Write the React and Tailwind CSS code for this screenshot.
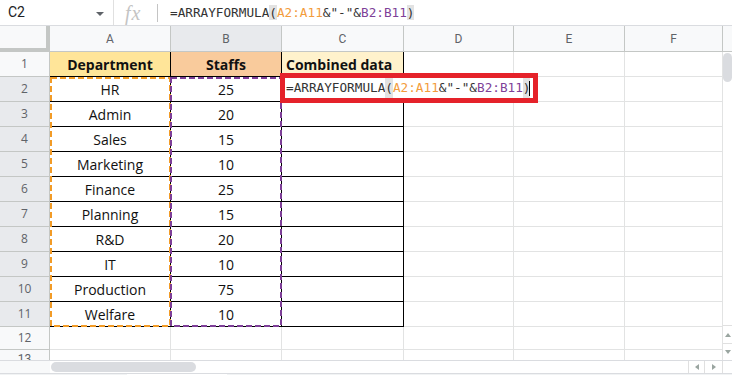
import React from "react";

const DATA = [
  ["HR", "25"],
  ["Admin", "20"],
  ["Sales", "15"],
  ["Marketing", "10"],
  ["Finance", "25"],
  ["Planning", "15"],
  ["R&D", "20"],
  ["IT", "10"],
  ["Production", "75"],
  ["Welfare", "10"],
];

const HEADERS = [
  { label: "A", w: "w-[121px]", bg: "bg-[#f8f9fa]" },
  { label: "B", w: "w-[111px]", bg: "bg-[#e8eaed]" },
  { label: "C", w: "w-[122px]", bg: "bg-[#f8f9fa]" },
  { label: "D", w: "w-[110px]", bg: "bg-[#f8f9fa]" },
  { label: "E", w: "w-[111px]", bg: "bg-[#f8f9fa]" },
  { label: "F", w: "w-[98px]", bg: "bg-[#f8f9fa]" },
];

const EMPTY = ["w-[110px]", "w-[111px]", "w-[98px]"];

const Formula = () => (
  <>
    <span>=ARRAYFORMULA</span>
    <span className="bg-[#e2e2e2]">(</span>
    <span className="text-[#f39c3c]">A2:A11</span>
    <span>{'&"-"&'}</span>
    <span className="text-[#7e3f98]">B2:B11</span>
    <span className="bg-[#e2e2e2]">)</span>
  </>
);

const RowNum = ({ n, active }) => (
  <div
    className={`flex w-[50px] items-center justify-center border-r border-b border-[#c4c7c5] text-[12px] text-[#5f6368] ${
      active ? "bg-[#e8eaed]" : "bg-[#f8f9fa]"
    }`}
  >
    {n}
  </div>
);

const EmptyCells = () =>
  EMPTY.map((w, i) => (
    <div key={i} className={`${w} border-r border-b border-[#e2e3e3]`} />
  ));

const Dashed = ({ w, h, color }) => (
  <svg width={w} height={h}>
    <rect
      x="1"
      y="1"
      width={w - 2}
      height={h - 2}
      fill="none"
      stroke={color}
      strokeWidth="2"
      strokeDasharray="6 3"
    />
  </svg>
);

const Tri = ({ dir }) => {
  const d = {
    up: "M0 4 L3 0 L6 4Z",
    down: "M0 0 L6 0 L3 4Z",
    left: "M4 0 L4 6 L0 3Z",
    right: "M0 0 L4 3 L0 6Z",
  }[dir];
  const vert = dir === "up" || dir === "down";
  return (
    <svg width={vert ? 6 : 4} height={vert ? 4 : 6}>
      <path d={d} fill="#9aa5a0" />
    </svg>
  );
};

export default function App() {
  return (
    <div className="relative h-[375px] w-[732px] overflow-hidden bg-white font-['Roboto',sans-serif]">
      {/* formula bar */}
      <div className="flex h-[26px] items-center border-b border-[#dadce0]">
        <div className="flex h-full w-[114px] items-center border-r border-[#e0e0e0] pl-[8px] pr-[9px]">
          <span className="flex-1 text-[14px] text-[#202124]">C2</span>
          <svg width="8" height="4" className="mt-[3px]">
            <path d="M0 0 L8 0 L4 4Z" fill="#5f6368" />
          </svg>
        </div>
        <div className="flex h-full w-[56px] items-center">
          <span className="ml-[11px] font-['Liberation_Serif',serif] text-[20px] italic leading-none tracking-[1px] text-[#c4c4c4]">
            fx
          </span>
          <div className="ml-auto mr-[12px] h-[18px] w-[1px] bg-[#c4c4c4]" />
        </div>
        <div className="font-['DejaVu_Sans_Mono',monospace] text-[12.7px] text-[#333]">
          <Formula />
        </div>
      </div>

      <div className="flex">
        {/* sheet */}
        <div className="w-[723px] font-['Open_Sans',sans-serif] text-[14px] text-[#111]">
          <div className="flex h-[26px]">
            <div className="w-[50px] border-r-[4px] border-b-[4px] border-[#c4c7c5] bg-[#f8f9fa]" />
            {HEADERS.map((h) => (
              <div
                key={h.label}
                className={`${h.w} ${h.bg} flex items-center justify-center border-r border-b border-[#c4c7c5] font-['Roboto',sans-serif] text-[12px] text-[#5f6368]`}
              >
                {h.label}
              </div>
            ))}
          </div>

          <div className="flex h-[25px]">
            <RowNum n={1} />
            <div className="flex w-[121px] items-center justify-center border-r border-b border-black bg-[#ffe599] font-bold">
              Department
            </div>
            <div className="flex w-[111px] items-center justify-center border-r border-b border-black bg-[#f9cb9c] font-bold">
              Staffs
            </div>
            <div className="flex w-[122px] items-center border-r border-b border-black bg-[#fff2cc] pl-[4px] font-bold">
              Combined data
            </div>
            <EmptyCells />
          </div>

          {DATA.map(([dept, n], i) => (
            <div key={dept} className="flex h-[25px]">
              <RowNum n={i + 2} active />
              <div className="flex w-[121px] items-center justify-center border-r border-b border-black">
                {dept}
              </div>
              <div className="flex w-[111px] items-center justify-center border-r border-b border-black">
                {n}
              </div>
              <div className="w-[122px] border-r border-b border-black" />
              <EmptyCells />
            </div>
          ))}

          <div className="flex h-[23px]">
            <RowNum n={12} />
            <div className="w-[121px] border-r border-b border-[#e2e3e3]" />
            <div className="w-[111px] border-r border-b border-[#e2e3e3]" />
            <div className="w-[122px] border-r border-b border-[#e2e3e3]" />
            <EmptyCells />
          </div>

          <div className="flex h-[10px] overflow-hidden">
            <div className="flex w-[50px] justify-center border-r border-[#c4c7c5] bg-[#f8f9fa] pt-[2px] text-[12px] leading-[14px] text-[#5f6368] font-['Roboto',sans-serif]">
              13
            </div>
            <div className="w-[121px] border-r border-[#e2e3e3]" />
            <div className="w-[111px] border-r border-[#e2e3e3]" />
            <div className="w-[122px] border-r border-[#e2e3e3]" />
            <div className="w-[110px] border-r border-[#e2e3e3]" />
            <div className="w-[111px] border-r border-[#e2e3e3]" />
            <div className="w-[98px] border-r border-[#e2e3e3]" />
          </div>
        </div>

        {/* vertical scrollbar */}
        <div className="flex w-[9px] flex-col">
          <div className="h-[26px] border-b border-[#c4c7c5] bg-[#f8f9fa]" />
          <div className="flex-1 pt-[1px]">
            <div className="h-[29px] rounded-full bg-[#dadce0]" />
          </div>
          <div className="flex h-[18px] items-center justify-center border-t border-[#e0e0e0]">
            <Tri dir="up" />
          </div>
          <div className="flex h-[17px] items-center justify-center border-t border-[#e0e0e0]">
            <Tri dir="down" />
          </div>
        </div>
      </div>

      {/* horizontal scrollbar */}
      <div className="flex h-[14px] border-y border-[#dadce0]">
        <div className="w-[50px] bg-[#f8f9fa]" />
        <div className="flex-1 pl-[1px] pt-[1px]">
          <div className="h-[10px] w-[145px] rounded-full bg-[#dadce0]" />
        </div>
        <div className="flex w-[16px] items-center justify-center border-l border-[#e0e0e0]">
          <Tri dir="left" />
        </div>
        <div className="flex w-[18px] items-center justify-center border-l border-[#e0e0e0]">
          <Tri dir="right" />
        </div>
        <div className="w-[10px] border-l border-[#e0e0e0]" />
      </div>
      <div className="flex h-[1px] bg-[#f1f3f4]">
        <div className="ml-[127px] w-[100px] bg-white" />
      </div>

      {/* copied ranges */}
      <div className="absolute left-[50px] top-[77px]">
        <Dashed w={121} h={250} color="#f29b26" />
      </div>
      <div className="absolute left-[170px] top-[77px]">
        <Dashed w={112} h={250} color="#7e3f98" />
      </div>

      {/* editing cell C2 */}
      <div className="absolute left-[280px] top-[73px] flex h-[30px] w-[258px] items-center border-[5px] border-[#e5222a] bg-white pl-[1px] font-['DejaVu_Sans_Mono',monospace] text-[12.7px] text-[#333]">
        <Formula />
        <span className="ml-[-1px] inline-block h-[15px] w-[1px] bg-black" />
      </div>
    </div>
  );
}
